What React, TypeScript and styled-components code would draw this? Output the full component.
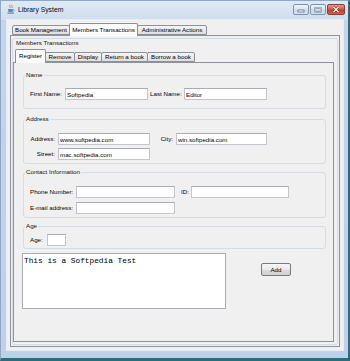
import React from "react";
import styled, { createGlobalStyle } from "styled-components";

const FONT = `"Liberation Sans", Arial, sans-serif`;

const Global = createGlobalStyle`
  html, body { margin: 0; padding: 0; background: #2a6d7c; }
  #root { width: 350px; height: 361px; }
  * { box-sizing: border-box; }
`;

const Window = styled.div`
  width: 350px;
  height: 361px;
  display: flex;
  flex-direction: column;
  background: linear-gradient(to bottom, #e0eaf6 0px, #cfdded 19px, #c2d5eb 19px, #bdd1e9 100%);
  border-left: 1px solid #90a8c4;
  border-top: 1px solid #90a8c4;
  border-right: 2px solid #2a6d7c;
  border-bottom: 3px solid #2a6d7c;
  font-family: ${FONT};
  font-size: 6.2px;
  color: #000;
`;

const TitleBar = styled.div`
  height: 18px;
  display: flex;
  align-items: flex-start;
  padding: 0 3px 0 6px;
`;

const TitleIcon = styled.svg`
  margin-top: 3px;
  width: 8px;
  height: 10px;
  flex: none;
`;

const TitleText = styled.div`
  margin: 4px 0 0 3px;
  font-size: 6.8px;
  line-height: 9px;
  color: #0a0a0a;
  flex: 1;
`;

const Controls = styled.div`
  display: flex;
  gap: 1px;
  margin-top: 3px;
`;

const CtrlButton = styled.div<{ $w: number; $close?: boolean }>`
  width: ${(p) => p.$w}px;
  height: 11px;
  border: 1px solid ${(p) => (p.$close ? "#83403a" : "#7d92ab")};
  border-radius: 2px;
  background: ${(p) =>
    p.$close
      ? "linear-gradient(#e59b8f 0%, #d2604f 45%, #c23c28 55%, #d5643c 100%)"
      : "linear-gradient(#eef3f9 0%, #dbe5f1 45%, #c9d8ea 55%, #d6e3f1 100%)"};
  display: flex;
  align-items: center;
  justify-content: center;
`;

const Body = styled.div`
  flex: 1;
  display: flex;
  padding: 0 4px 7px 5px;
`;

const Content = styled.div`
  flex: 1;
  display: flex;
  flex-direction: column;
  background: #f0f0f0;
  border: 1px solid #e6edf6;
  padding: 3px;
`;

const TabStrip = styled.div<{ $h: number; $pl: number }>`
  display: flex;
  align-items: flex-end;
  height: ${(p) => p.$h}px;
  padding-left: ${(p) => p.$pl}px;
  flex: none;
`;

const Tab = styled.div<{ $w: number; $sel?: boolean; $h: number }>`
  position: relative;
  z-index: ${(p) => (p.$sel ? 2 : 1)};
  width: ${(p) => p.$w}px;
  height: ${(p) => p.$h}px;
  margin-bottom: ${(p) => (p.$sel ? -1 : 0)}px;
  & + & { margin-left: -1px; }
  border: 1px solid #8e9199;
  border-bottom: ${(p) => (p.$sel ? "none" : "1px solid #8e9199")};
  border-radius: 2px 2px 0 0;
  background: ${(p) =>
    p.$sel ? "#fbfbfb" : "linear-gradient(#f4f4f4 0%, #ebebeb 50%, #dedede 100%)"};
  display: flex;
  align-items: ${(p) => (p.$sel ? "flex-start" : "center")};
  padding-top: ${(p) => (p.$sel ? 2 : 0)}px;
  justify-content: center;
  white-space: nowrap;
  font-size: 6.2px;
  line-height: 8px;
  color: #000;
`;

const TabPanel = styled.div<{ $pad: string; $margin: string }>`
  flex: 1;
  display: flex;
  flex-direction: column;
  border: 1px solid #8e9199;
  background: #f0f0f0;
  padding: ${(p) => p.$pad};
  margin: ${(p) => p.$margin};
`;

const TitledGroup = styled.div`
  flex: 1;
  display: flex;
  flex-direction: column;
  border: 1px solid #d3dde6;
  border-radius: 2px;
`;

const GroupTitle = styled.div`
  margin: 0 0 2px 3px;
  line-height: 8px;
  font-size: 6.2px;
  color: #111;
`;

const RegisterPanel = styled.div`
  flex: 1;
  display: flex;
  flex-direction: column;
  padding: 8px 7px 0 9px;
`;

const Group = styled.fieldset<{ $mt: number; $pt: number; $pb: number }>`
  margin: ${(p) => p.$mt}px 0 0 0;
  min-width: 0;
  border: 1px solid #d3dde6;
  border-radius: 3px;
  padding: ${(p) => p.$pt}px 1px ${(p) => p.$pb}px 1px;
`;

const Legend = styled.legend`
  padding: 0 1px;
  line-height: 8px;
  font-size: 6.2px;
  color: #111;
`;

const FormGrid = styled.div<{ $cols: string; $gap: number; $rgap?: number }>`
  display: grid;
  grid-template-columns: ${(p) => p.$cols};
  column-gap: ${(p) => p.$gap}px;
  row-gap: ${(p) => p.$rgap ?? 3}px;
  margin-left: 5px;
  align-items: center;
`;

const Label = styled.span<{ $right?: boolean }>`
  font-size: 6.2px;
  line-height: 8px;
  white-space: nowrap;
  text-align: ${(p) => (p.$right ? "right" : "left")};
`;

const Field = styled.input`
  display: block;
  width: 100%;
  height: 12px;
  margin: 0;
  padding: 0 1px;
  border: 1px solid #c2c5cc;
  border-top-color: #a9acb3;
  background: #fff;
  font-family: ${FONT};
  font-size: 6.2px;
  color: #000;
  outline: none;
`;

const BottomRow = styled.div`
  display: flex;
  align-items: flex-start;
  margin-top: 4px;
`;

const Notes = styled.textarea`
  width: 204px;
  height: 56px;
  margin: 0 0 0 -1px;
  padding: 3px 1px;
  border: 1px solid #a7aab0;
  background: #fff;
  resize: none;
  overflow: hidden;
  font-family: "Liberation Mono", "Courier New", monospace;
  font-size: 7.8px;
  line-height: 9px;
  color: #000;
  outline: none;
`;

const Button = styled.button`
  width: 30px;
  height: 13px;
  margin: 10px 0 0 35px;
  padding: 0;
  border: 1px solid #7a7a7a;
  border-radius: 2px;
  background: linear-gradient(#f6f6f6 0%, #eaeaea 50%, #dcdcdc 51%, #d0d0d0 100%);
  font-family: ${FONT};
  font-size: 6.2px;
  line-height: 8px;
  color: #000;
`;

const JavaIcon = () => (
  <TitleIcon viewBox="0 0 8 10">
    <path d="M3 0.5 C2 2 4 2.5 3 4" stroke="#e0762a" strokeWidth="0.8" fill="none" />
    <path d="M5 1 C4.2 2.2 5.8 2.6 5 4" stroke="#e0762a" strokeWidth="0.8" fill="none" />
    <path d="M1 5 L6 5 L5.5 8 L1.5 8 Z" fill="#5b84c4" />
    <path d="M6 5.6 C7.6 5.6 7.6 7.2 5.8 7.2" stroke="#5b84c4" strokeWidth="0.7" fill="none" />
    <rect x="0.5" y="8.6" width="6.5" height="0.9" fill="#3d64a8" />
  </TitleIcon>
);

const MinGlyph = () => (
  <svg width="8" height="6" viewBox="0 0 8 6">
    <rect x="1" y="3" width="6" height="2" fill="#fff" stroke="#3c4a5c" strokeWidth="0.6" />
  </svg>
);

const MaxGlyph = () => (
  <svg width="8" height="6" viewBox="0 0 8 6">
    <rect x="1.3" y="0.8" width="5.4" height="4.4" fill="none" stroke="#3c4a5c" strokeWidth="1.3" />
    <rect x="1.3" y="0.8" width="5.4" height="4.4" fill="none" stroke="#fff" strokeWidth="0.6" />
  </svg>
);

const CloseGlyph = () => (
  <svg width="8" height="7" viewBox="0 0 8 7">
    <path d="M1.5 1 L6.5 6 M6.5 1 L1.5 6" stroke="#5a1a14" strokeWidth="2" />
    <path d="M1.5 1 L6.5 6 M6.5 1 L1.5 6" stroke="#fff" strokeWidth="1.1" />
  </svg>
);

export default function App() {
  return (
    <>
      <Global />
      <Window>
        <TitleBar>
          <JavaIcon />
          <TitleText>Library System</TitleText>
          <Controls>
            <CtrlButton $w={16}>
              <MinGlyph />
            </CtrlButton>
            <CtrlButton $w={16}>
              <MaxGlyph />
            </CtrlButton>
            <CtrlButton $w={18} $close>
              <CloseGlyph />
            </CtrlButton>
          </Controls>
        </TitleBar>
        <Body>
          <Content>
            <TabStrip $h={12} $pl={2}>
              <Tab $w={58} $h={10}>Book Management</Tab>
              <Tab $w={69} $h={13} $sel>
                Members Transactions
              </Tab>
              <Tab $w={70} $h={10}>Administrative Actions</Tab>
            </TabStrip>
            <TabPanel $pad="2px 1px 1px 1px" $margin="0">
              <TitledGroup>
                <GroupTitle>Members Transactions</GroupTitle>
                <TabStrip $h={13} $pl={2}>
                  <Tab $w={31} $h={14} $sel>
                    Register
                  </Tab>
                  <Tab $w={30} $h={10}>Remove</Tab>
                  <Tab $w={28} $h={10}>Display</Tab>
                  <Tab $w={47} $h={10}>Return a book</Tab>
                  <Tab $w={48} $h={10}>Borrow a book</Tab>
                </TabStrip>
                <TabPanel $pad="0" $margin="0 3px 2px 0">
                  <RegisterPanel>
                    <Group $mt={0} $pt={9} $pb={8}>
                      <Legend>Name</Legend>
                      <FormGrid $cols="33px 83px 32px 83px" $gap={2}>
                        <Label>First Name:</Label>
                        <Field defaultValue="Softpedia" />
                        <Label>Last Name:</Label>
                        <Field defaultValue="Editor" />
                      </FormGrid>
                    </Group>
                    <Group $mt={6} $pt={10} $pb={3}>
                      <Legend>Address</Legend>
                      <FormGrid $cols="25px 92px 20px 91px" $gap={3}>
                        <Label $right>Address:</Label>
                        <Field defaultValue="www.softpedia.com" />
                        <Label $right>City:</Label>
                        <Field defaultValue="win.softpedia.com" />
                        <Label $right>Street:</Label>
                        <Field defaultValue="mac.softpedia.com" />
                      </FormGrid>
                    </Group>
                    <Group $mt={4} $pt={10} $pb={3}>
                      <Legend>Contact Information</Legend>
                      <FormGrid $cols="44px 99px 12px 98px" $gap={2} $rgap={4}>
                        <Label>Phone Number:</Label>
                        <Field defaultValue="" />
                        <Label $right>ID:</Label>
                        <Field defaultValue="" />
                        <Label>E-mail address:</Label>
                        <Field defaultValue="" />
                      </FormGrid>
                    </Group>
                    <Group $mt={4} $pt={4} $pb={2}>
                      <Legend>Age</Legend>
                      <FormGrid $cols="15px 19px" $gap={2}>
                        <Label>Age:</Label>
                        <Field defaultValue="" />
                      </FormGrid>
                    </Group>
                    <BottomRow>
                      <Notes defaultValue="This is a Softpedia Test" spellCheck={false} />
                      <Button>Add</Button>
                    </BottomRow>
                  </RegisterPanel>
                </TabPanel>
              </TitledGroup>
            </TabPanel>
          </Content>
        </Body>
      </Window>
    </>
  );
}
